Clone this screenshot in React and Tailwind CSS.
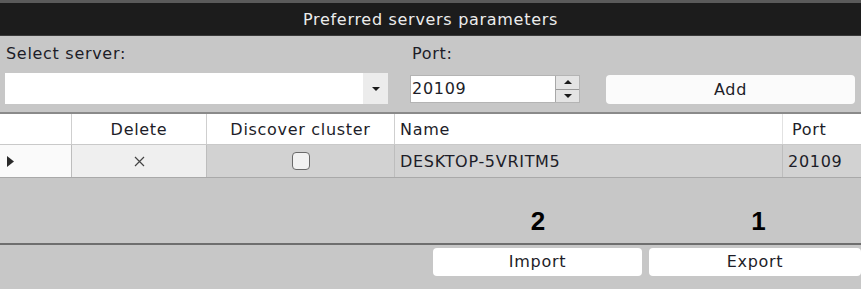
const font = { fontFamily: '"DejaVu Sans", Verdana, sans-serif', letterSpacing: '0.7px' };
const numFont = { fontFamily: '"Liberation Sans", Arial, sans-serif', color: '#000', letterSpacing: 0 };

const Tri = ({ dir = 'down', className = '' }) => {
  const pts = {
    down: '0,0 8,0 4,4',
    up: '0,4 8,4 4,0',
  };
  return (
    <svg className={className} width="8" height="4" viewBox="0 0 8 4">
      <polygon points={pts[dir]} fill="#1a1a1a" />
    </svg>
  );
};

export default function App() {
  return (
    <div className="w-[861px] h-[289px] bg-[#c7c7c7] overflow-hidden text-[#1d1d28]" style={font}>
      {/* title */}
      <div className="border-t-[3px] border-[#5a5a5a] bg-[#1c1c1c] h-[36px] flex items-center justify-center border-b border-b-[#3a3a3a]">
        <span className="text-[16px] text-[#ececec] pt-[1px]">Preferred servers parameters</span>
      </div>

      {/* form */}
      <div className="flex h-[74px] pt-[8px]">
        <div className="ml-[5px] w-[383px] flex flex-col">
          <span className="text-[16px] leading-[20px] ml-[1px]">Select server:</span>
          <div className="mt-[9px] h-[31px] bg-white flex">
            <div className="flex-1" />
            <div className="w-[25px] bg-[#ececec] flex items-center justify-center">
              <Tri />
            </div>
          </div>
        </div>
        <div className="ml-[22px] w-[170px] flex flex-col">
          <span className="text-[16px] leading-[20px] ml-[2px]">Port:</span>
          <div className="mt-[11px] h-[28px] bg-white flex border border-[#b4b4b4]">
            <span className="flex-1 text-[16px] leading-[26px] pl-[1px]">20109</span>
            <div className="w-[24px] bg-[#e4e4e4] border-l border-[#a8a8a8] flex flex-col">
              <div className="flex-1 flex items-center justify-center border-b border-[#9a9a9a]">
                <Tri dir="up" />
              </div>
              <div className="flex-1 flex items-center justify-center">
                <Tri />
              </div>
            </div>
          </div>
        </div>
        <div className="ml-[26px] mt-[31px] w-[249px] h-[29px] bg-[#fbfbfb] rounded-[4px] flex items-center justify-center text-[16px]">
          Add
        </div>
      </div>

      {/* table */}
      <div className="mt-[2px] border-t-2 border-[#8a8a8a]">
        <div className="flex h-[31px] bg-white border-b border-[#c9c9c9] text-[16px]">
          <div className="w-[72px] border-r border-[#cfcfcf]" />
          <div className="w-[135px] border-r border-[#cfcfcf] flex items-center justify-center pt-[2px]">Delete</div>
          <div className="w-[188px] border-r border-[#cfcfcf] flex items-center justify-center pt-[2px]">Discover cluster</div>
          <div className="w-[388px] border-r border-[#e2e2e2] flex items-center pl-[5px] pt-[2px]">Name</div>
          <div className="flex-1 flex items-center pl-[9px] pt-[2px]">Port</div>
        </div>
        <div className="flex h-[33px] border-b border-[#a9a9a9] text-[16px]">
          <div className="w-[72px] bg-[#fafafa] border-r border-[#bdbdbd] flex items-center pl-[7px]">
            <svg width="7" height="11" viewBox="0 0 7 11">
              <polygon points="0,0 7,5.5 0,11" fill="#2a2a2a" />
            </svg>
          </div>
          <div className="w-[135px] bg-[#efefef] border-r border-[#bdbdbd] flex items-center justify-center">
            <svg width="11" height="11" viewBox="0 0 11 11">
              <path d="M1 1L10 10M10 1L1 10" stroke="#444" strokeWidth="1.2" />
            </svg>
          </div>
          <div className="w-[188px] bg-[#d2d2d2] border-r border-[#bdbdbd] flex items-center justify-center">
            <div className="w-[18px] h-[18px] rounded-[4px] border border-[#6a6a6a] bg-[#f2f2f2]" />
          </div>
          <div className="w-[388px] bg-[#d2d2d2] border-r border-[#bdbdbd] flex items-center pl-[5px] pt-[2px]">DESKTOP-5VRITM5</div>
          <div className="flex-1 bg-[#d2d2d2] flex items-center pl-[5px] pt-[2px]">20109</div>
        </div>
      </div>

      {/* bottom */}
      <div className="h-[65px] flex items-end">
        <div className="ml-[433px] w-[211px] flex justify-center">
          <span className="text-[26px] font-bold leading-[26px] mb-[9px]" style={numFont}>2</span>
        </div>
        <div className="ml-[7px] w-[212px] flex justify-center">
          <span className="text-[26px] font-bold leading-[26px] mb-[9px] ml-[6px]" style={numFont}>1</span>
        </div>
      </div>
      <div className="border-t-2 border-[#6e6e6e] pt-[3px] flex">
        <div className="ml-[433px] w-[211px] h-[28px] bg-white rounded-[4px] flex items-center justify-center text-[16px]">Import</div>
        <div className="ml-[7px] w-[214px] h-[28px] bg-white rounded-[4px] flex items-center justify-center text-[16px]">Export</div>
      </div>
    </div>
  );
}
